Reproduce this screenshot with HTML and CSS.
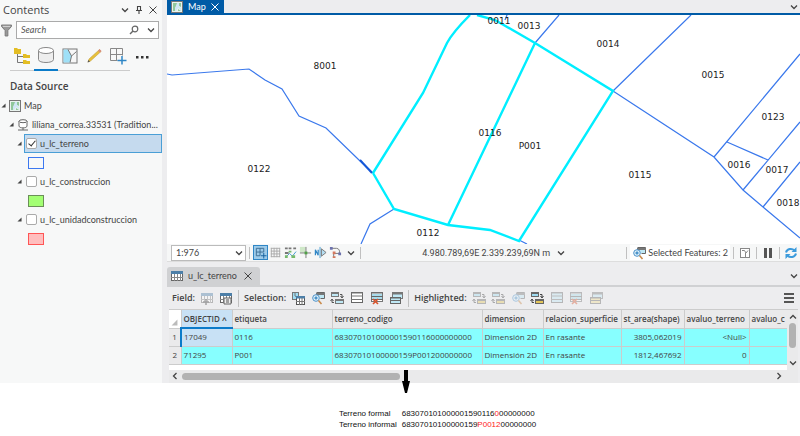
FILE: index.html
```html
<!DOCTYPE html>
<html lang="en">
<head>
  <meta charset="UTF-8" />
  <meta name="viewport" content="width=device-width, initial-scale=1.0"/>
  <title>Map - u_lc_terreno</title>
  <link rel="stylesheet" href="styles.css">
</head>
<body>
  <svg class="defs" width="0" height="0" aria-hidden="true">
    <symbol id="chevron" viewBox="0 0 8 8"><path d="M1 2.5 4 5.5 7 2.5" fill="none" stroke="currentColor" stroke-width="1.3"/></symbol>
    <symbol id="close" viewBox="0 0 8 8"><path d="M.5 .5 7.500 7.500M7.500 .5 .5 7.500" fill="none" stroke="currentColor" stroke-width="1"/></symbol>
    <symbol id="arrow" viewBox="0 0 6 6"><path d="M5.500 .5v5H.5z" fill="currentColor"/></symbol>
    <symbol id="map" viewBox="0 0 12 12"><rect x=".5" y=".5" width="11" height="11" fill="#e9f3ee" stroke="#777"/><path d="M2 2h4v3L4 7v3H2zM8 2h2v4L8 5zM7 8l3 2H7z" fill="#8fc79b"/><path d="M6 2h2v3l2 2v2L7 7 5 10H4V7z" fill="#cfe6f5"/></symbol>
    <symbol id="grid-table" viewBox="0 0 14 14"><rect x="1.500" y="2.500" width="11" height="9" fill="#fff" stroke="#666"/><path d="M1 2h12v3H1z" fill="#4d7fa8"/><path d="M1 8.500h12M4.500 5v7M7.500 5v7M10.500 5v7" stroke="#888" fill="none"/></symbol>
    <symbol id="rows" viewBox="0 0 14 14"><rect x="1.500" y="1.500" width="11" height="10" fill="#fff" stroke="#666"/><path d="M1 2h12M1 5h12M1 8.500h12" stroke="#777" fill="none"/></symbol>
    <symbol id="rows-blue" viewBox="0 0 14 14"><rect x="1.500" y="1.500" width="11" height="10" fill="#bfe8f5" stroke="#666"/><path d="M1 2h12M1 5h12M1 8.500h12" stroke="#777" fill="none"/></symbol>
    <symbol id="select-attr" viewBox="0 0 14 14"><rect x="1.500" y="1.500" width="6" height="7" fill="#9fdcf2" stroke="#777"/><path d="M4 2v3l4 2" fill="none" stroke="#777"/><rect x="5.500" y="5.500" width="8" height="8" fill="#fff" stroke="#555"/><path d="M5 5h9v2.500H5z" fill="#4d7fa8"/><path d="M5 10.500h9M8.500 7v7M11 7v7" stroke="#777" fill="none"/></symbol>
    <symbol id="zoom-sel" viewBox="0 0 14 14"><path d="M5.500 1.500h8v6h-4" fill="#bfe8f5" stroke="#666"/><path d="M5 2h9v2H5z" fill="#777"/><circle cx="5" cy="7" r="3.300" fill="#e5f4fb" stroke="#4b90c8"/><path d="M5 5.300v3.400M3.300 7h3.400" stroke="#1b75bb" fill="none"/><path d="m7.500 9.500 3 3.500" stroke="#c98a4b" stroke-width="1.600"/></symbol>
    <symbol id="switch" viewBox="0 0 14 14"><path d="M1 1h8v5H1z" fill="#777"/><path d="M2 3h6v2H2z" fill="#bfe8f5"/><path d="M5 8h9v5H5z" fill="#777"/><path d="M6 10h7v2H6z" fill="#bfe8f5"/><path d="M10 3.500h2v3M4 11.500H2V8.500M10.500 5l1.500 2 1.500-2M.5 10 2 8l1.500 2" stroke="#555" fill="none"/></symbol>
    <symbol id="switch-gold" viewBox="0 0 14 14"><path d="M1 1h8v5H1z" fill="#666"/><path d="M2 3h6v2H2z" fill="#9fdcf2"/><path d="M5 8h9v5H5z" fill="#666"/><path d="M6 10h7v2H6z" fill="#e3c65b"/><path d="M10 3.500h2v3M4 11.500H2V8.500M10.500 5l1.500 2 1.500-2M.5 10 2 8l1.500 2" stroke="#444" fill="none"/></symbol>
    <symbol id="clear" viewBox="0 0 14 14"><rect x="1.500" y="1.500" width="11" height="9" fill="#fff" stroke="#777"/><path d="M2 3h10v2H2zM2 6h10v2H2z" fill="#a9dcec"/><path d="M1 2h12M1 5.500h12M1 8.500h12" stroke="#666" fill="none"/><path d="m3 8 5 5M8 8l-5 5" stroke="#d9532c" stroke-width="1.600"/></symbol>
    <symbol id="stack" viewBox="0 0 14 14"><rect x="3.500" y="1.500" width="10" height="6" fill="#bfe8f5" stroke="#777"/><path d="M3 2.500h11" stroke="#777" stroke-width="2"/><rect x="1.500" y="6.500" width="10" height="6" fill="#bfe8f5" stroke="#666"/><path d="M1 7h11M1 9.500h11" stroke="#666" fill="none"/></symbol>
    <symbol id="stack-gold" viewBox="0 0 14 14"><rect x="3.500" y="1.500" width="10" height="6" fill="#bfe8f5" stroke="#777"/><path d="M3 2.500h11" stroke="#777" stroke-width="2"/><rect x="1.500" y="6.500" width="10" height="6" fill="#f0dc92" stroke="#666"/><path d="M1 7h11M1 9.500h11" stroke="#666" fill="none"/></symbol>
  </svg>

  <div class="app">
    <aside class="contents">
      <header class="pane-title">
        <h1>Contents</h1>
        <button aria-label="Options"><svg class="i8"><use href="#chevron"/></svg></button>
        <button aria-label="Pin"><svg class="i8" viewBox="0 0 8 8"><path d="M2.500 0v4.500M5.500 0v4.500M2 .5h4M1 4.500h6M4 4.500V8" fill="none" stroke="currentColor" stroke-width="1.100"/></svg></button>
        <button aria-label="Close"><svg class="i8"><use href="#close"/></svg></button>
      </header>

      <div class="search-row">
        <svg class="funnel" viewBox="0 0 12 14"><path d="M.5 1h11v1.500L7.500 7v6h-3V7L.5 2.500z" fill="#999" stroke="#777"/><path d="M2 2.500h8" stroke="#ddd"/></svg>
        <div class="search">
          <input type="text" placeholder="Search" aria-label="Search">
          <svg class="lens" viewBox="0 0 10 10"><circle cx="6" cy="4" r="2.800" fill="none" stroke="#666" stroke-width="1.200"/><path d="M4 6 1 9" stroke="#666" stroke-width="1.500"/></svg>
          <svg class="i8"><use href="#chevron"/></svg>
        </div>
      </div>

      <nav class="views">
        <button aria-label="List by drawing order"><svg viewBox="0 0 18 18"><path d="M4.500 7v8.500H11M4.500 9.500H11" fill="none" stroke="#777"/><path d="M1 1h3l1 1h3v5H1zM10 7h3l1 1h3v3h-7zM10 13h3l1 1h3v3h-7z" fill="#e3bd24"/></svg></button>
        <button class="active" aria-label="List by data source"><svg viewBox="0 0 18 18"><path d="M1.500 4.500v9c0 4 15 4 15 0v-9" fill="#eee" stroke="#888"/><ellipse cx="9" cy="4.500" rx="7.500" ry="3" fill="#fff" stroke="#888"/></svg></button>
        <button aria-label="List by selection"><svg viewBox="0 0 18 18"><rect x="2" y="2" width="14" height="14" fill="#f7f7f7" stroke="#777"/><path d="M2.500 2.500H7l3.500 6.500L9 15.500H2.500z" fill="#9fe0f7"/><path d="m7 2.500 3.500 6.500L9 15.500M10.500 9l5-4.500" fill="none" stroke="#777"/></svg></button>
        <button aria-label="List by editing"><svg viewBox="0 0 18 18"><path d="m3 15 1-3L14.500 2.500l1.500 2L5.500 14z" fill="#e8c13a" stroke="#c3a044" stroke-width=".6"/><path d="m2.500 15.500 1-2.500 1.500 1.500z" fill="#555"/><path d="m13 4 1.500-2 2 2L15 5.500z" fill="#d98d7f"/></svg></button>
        <button aria-label="List by snapping"><svg viewBox="0 0 18 18"><path d="M1.500 1.500h12v7M1.500 1.500v12h7M7.500 1.500v12M1.500 7.500h12" fill="none" stroke="#888"/><path d="M13 9v8.500M8.500 13.500h9" stroke="#2f86c6" stroke-width="1.500"/></svg></button>
        <button aria-label="More"><svg viewBox="0 0 18 18"><path d="M3 9h2.500v2.500H3zM8 9h2.500v2.500H8zM13 9h2.500v2.500H13z" fill="#333"/></svg></button>
      </nav>

      <h2>Data Source</h2>
      <ul class="tree">
        <li class="node"><svg class="tri"><use href="#arrow"/></svg><svg class="i12"><use href="#map"/></svg><span>Map</span></li>
        <li class="node source"><svg class="tri"><use href="#arrow"/></svg><svg class="i12" viewBox="0 0 12 12"><path d="M2 2v5c0 2.500 8 2.500 8 0V2" fill="#fff" stroke="#666"/><ellipse cx="6" cy="2.200" rx="4" ry="1.500" fill="#fff" stroke="#666"/><path d="M6 9v2M1 11h10" stroke="#666"/></svg><span>liliana_correa.33531 (Tradition...</span></li>
        <li class="node layer selected"><svg class="tri"><use href="#arrow"/></svg><label><input type="checkbox" checked> u_lc_terreno</label></li>
        <li class="swatch-row"><i class="swatch blue"></i></li>
        <li class="node layer"><svg class="tri"><use href="#arrow"/></svg><label><input type="checkbox"> u_lc_construccion</label></li>
        <li class="swatch-row"><i class="swatch green"></i></li>
        <li class="node layer"><svg class="tri"><use href="#arrow"/></svg><label><input type="checkbox"> u_lc_unidadconstruccion</label></li>
        <li class="swatch-row"><i class="swatch red"></i></li>
      </ul>
    </aside>

    <main class="work">
      <div class="map-tabs">
        <button class="map-tab"><svg class="i12"><use href="#map"/></svg>Map<svg class="i8"><use href="#close"/></svg></button>
        <svg class="i8"><use href="#chevron"/></svg>
      </div>

      <svg class="map" viewBox="0 0 633 229">
        <g class="parcel">
          <path d="M0 59 5 60 82 54 98 65 115 74 132 101 159 113 192 145 206 158"/>
          <path d="M227 194 203 209 194 229"/>
          <path d="M368 28 392 0M338 5 340 0M446 76 524 0M446 76 547 142 576 175 596 192 633 223M547 142 633 39M560 127 601 145M576 175 633 107M596 192 633 147M352 225 360 229"/>
        </g>
        <path class="parcel-dark" d="m193 145 12 13"/>
        <path class="picked" d="M206 158 256 78 280 28Q286 17 303 0M310 0 328 5 368 28 446 76 352 226 323 215 281 210 227 194 206 158M368 28 281 210"/>
        <g class="labels">
          <text x="158" y="54">8001</text>
          <text x="92" y="157">0122</text>
          <text x="332" y="9">0011</text>
          <text x="362" y="14">0013</text>
          <text x="441" y="32">0014</text>
          <text x="546" y="63">0015</text>
          <text x="606" y="105">0123</text>
          <text x="323" y="121">0116</text>
          <text x="363" y="134">P001</text>
          <text x="473" y="163">0115</text>
          <text x="572" y="153">0016</text>
          <text x="610" y="158">0017</text>
          <text x="621" y="191">0018</text>
          <text x="261" y="221">0112</text>
        </g>
      </svg>

      <div class="status">
        <div class="scale">
          <select aria-label="Scale"><option>1:976</option></select>
          <svg class="i8"><use href="#chevron"/></svg>
        </div>
        <i class="sep"></i>
        <div class="tools">
          <button class="on" aria-label="Snapping"><svg viewBox="0 0 14 14"><path d="M2.500 2.500h8v4M2.500 2.500v8h4M6.500 2.500v8M2.500 6.500h8" fill="none" stroke="#3b6c92"/><path d="M10.500 7.500v6M7.500 10.500h6" stroke="#125e9c"/></svg></button>
          <button aria-label="Grid"><svg viewBox="0 0 14 14"><path d="M2.500 2v10M5.500 2v10M8.500 2v10M11.500 2v10M2 2.500h10M2 5.500h10M2 8.500h10M2 11.500h10" fill="none" stroke="#aaa"/></svg></button>
          <button aria-label="Inference"><svg viewBox="0 0 14 14"><path d="M1 2.500h3M5 2.500h3M10 2.500h3M1 7.500h4" stroke="#777" stroke-width="2"/><path d="m2 12 4-4 3 3 4-5" fill="none" stroke="#3f98cf"/><path d="M1 10h3v3H1zM8 10h4v3H8zM5 5h3v2H5z" fill="#76b96a"/></svg></button>
          <button aria-label="Dynamic constraints"><svg viewBox="0 0 14 14"><path d="M1 1h6v6H1z" fill="#cfe8c8"/><path d="M7.500 1v12M1 7.500h12" stroke="#777"/><path d="M6 6h3v3H6z" fill="#4fa046"/></svg></button>
          <button aria-label="Ground to grid"><svg viewBox="0 0 14 14"><path d="M1.500 10V4l3 6V4" fill="none" stroke="#2f86c6" stroke-width="1.300"/><path d="M6.500 1v12" stroke="#3f98cf"/><path d="m8 3 5 4-5 4z" fill="#b5def2" stroke="#777"/></svg></button>
          <button aria-label="Topology"><svg viewBox="0 0 14 14"><path d="M2 2.500h6c3 0 4 3 3 6M11 8H5v4" fill="none" stroke="#777"/><path d="M1 1h3v3H1zM10 7h3v3h-3z" fill="#6d72ad"/><path d="M4 6h3v3H4zM4 11h3v2H4z" fill="#d6785e"/></svg></button>
          <button aria-label="More tools"><svg class="i8"><use href="#chevron"/></svg></button>
        </div>
        <i class="sep"></i>
        <div class="coords"><span>4.980.789,69E 2.339.239,69N m</span><svg class="i8"><use href="#chevron"/></svg></div>
        <i class="sep"></i>
        <button class="features"><svg class="i14"><use href="#zoom-sel"/></svg>Selected Features: 2</button>
        <i class="sep"></i>
        <button class="end-tool" aria-label="Show selection"><svg class="i12" viewBox="0 0 12 12"><rect x="1.500" y="1.500" width="9" height="9" fill="#fff" stroke="#888"/><path d="M3 3.500h2.500L7 6l2-2.500M6.500 6v4" fill="none" stroke="#888"/></svg></button>
        <i class="sep"></i>
        <button class="end-tool" aria-label="Pause drawing"><svg class="i12" viewBox="0 0 12 12"><path d="M2 1h3v10H2zM7 1h3v10H7z" fill="#555"/></svg></button>
        <i class="sep"></i>
        <button class="end-tool" aria-label="Refresh"><svg class="i12" viewBox="0 0 12 12"><path d="M1 5.500C2 1.500 7 1 9.500 3.500M11 6.500C10 10.500 5 11 2.500 8.500" fill="none" stroke="#3c9bdc" stroke-width="2"/><path d="M11.500 0v5h-5zM.5 12V7h5z" fill="#3c9bdc"/></svg></button>
      </div>

      <div class="table-tabs">
        <button class="table-tab"><svg class="i14"><use href="#grid-table"/></svg>u_lc_terreno<svg class="i8"><use href="#close"/></svg></button>
        <svg class="i8"><use href="#chevron"/></svg>
      </div>

      <div class="toolbar">
        <b>Field:</b>
        <div class="icons two">
          <button class="faded" aria-label="Add field"><svg class="i14" viewBox="0 0 14 14"><use href="#grid-table"/><path d="M6 8v6M3 11h6" stroke="#333" stroke-width="1.500"/></svg></button>
          <button aria-label="Calculate field"><svg class="i14" viewBox="0 0 14 14"><use href="#grid-table"/><path d="M5 7h7v6H5z" fill="#eee" stroke="#666"/><path d="M7 9h3M7 11h3" stroke="#555"/></svg></button>
        </div>
        <i class="sep"></i>
        <b>Selection:</b>
        <div class="icons six">
          <button aria-label="Select by attributes"><svg class="i14"><use href="#select-attr"/></svg></button>
          <button aria-label="Zoom to selection"><svg class="i14"><use href="#zoom-sel"/></svg></button>
          <button aria-label="Switch selection"><svg class="i14"><use href="#switch"/></svg></button>
          <button aria-label="Select all"><svg class="i14"><use href="#rows"/></svg></button>
          <button aria-label="Clear selection"><svg class="i14"><use href="#clear"/></svg></button>
          <button aria-label="Copy selection"><svg class="i14"><use href="#stack"/></svg></button>
        </div>
        <i class="sep"></i>
        <b>Highlighted:</b>
        <div class="icons seven">
          <button class="faded" aria-label="Unselect"><svg class="i14"><use href="#switch-gold"/></svg></button>
          <button class="faded" aria-label="Reselect"><svg class="i14"><use href="#switch-gold"/></svg></button>
          <button class="faded" aria-label="Zoom to highlighted"><svg class="i14"><use href="#zoom-sel"/></svg></button>
          <button aria-label="Switch highlighted"><svg class="i14"><use href="#switch-gold"/></svg></button>
          <button class="faded" aria-label="Highlight all"><svg class="i14"><use href="#rows-blue"/></svg></button>
          <button class="faded" aria-label="Delete highlighted"><svg class="i14"><use href="#clear"/></svg></button>
          <button class="faded" aria-label="Copy highlighted"><svg class="i14"><use href="#stack-gold"/></svg></button>
        </div>
        <button class="menu" aria-label="Menu"><svg class="i12" viewBox="0 0 12 12"><path d="M1 2h10M1 6h10M1 10h10" stroke="#555" stroke-width="2"/></svg></button>
      </div>

      <div class="grid">
        <div class="grid-view">
          <table>
            <colgroup><col class="w-num"><col class="w-id"><col class="w-tag"><col class="w-code"><col class="w-dim"><col class="w-rel"><col class="w-area"><col class="w-val"><col></colgroup>
            <thead>
              <tr><th class="corner"><svg><use href="#arrow"/></svg></th><th class="sorted">OBJECTID ˄</th><th>etiqueta</th><th>terreno_codigo</th><th>dimension</th><th>relacion_superficie</th><th>st_area(shape)</th><th>avaluo_terreno</th><th>avaluo_c</th></tr>
            </thead>
            <tbody>
              <tr class="current"><th>1</th><td>17049</td><td>0116</td><td>683070101000001590116000000000</td><td>Dimensión 2D</td><td>En rasante</td><td class="num">3805,062019</td><td class="num">&lt;Null&gt;</td><td></td></tr>
              <tr><th>2</th><td>71295</td><td>P001</td><td>68307010100000159P001200000000</td><td>Dimensión 2D</td><td>En rasante</td><td class="num">1812,467692</td><td class="num">0</td><td></td></tr>
            </tbody>
          </table>
        </div>
        <div class="vscroll"><svg class="i8 up"><use href="#chevron"/></svg><i></i><svg class="i8"><use href="#chevron"/></svg></div>
        <div class="hscroll">
          <svg class="i8 left"><use href="#chevron"/></svg><div class="track"><i></i></div><svg class="i8 right"><use href="#chevron"/></svg>
          <svg class="pointer" viewBox="0 0 8 24"><path d="M2 0h4v11h2L5 23H3L0 11h2z" fill="#000"/></svg>
        </div>
      </div>
    </main>
  </div>

  <dl class="caption">
    <dt>Terreno formal</dt><dd>683070101000001590116<em>0</em>00000000</dd>
    <dt>Terreno informal</dt><dd>68307010100000159<em>P0012</em>00000000</dd>
  </dl>
</body>
</html>
```

FILE: styles.css
```css
* {
  box-sizing: border-box;
  margin: 0;
  padding: 0;
}

body {
  background: #fff;
  color: #444;
  font-family: Lato, "Open Sans", sans-serif;
  font-size: 9px;
  line-height: 12px;
}

button,
input,
select {
  font: inherit;
  color: inherit;
  border: none;
  background: none;
}

button {
  display: flex;
  align-items: center;
}

svg {
  display: block;
  flex: none;
}

.defs {
  position: absolute;
}

.i8 { width: 8px; height: 8px; }
.i12 { width: 12px; height: 12px; }
.i14 { width: 14px; height: 14px; }
.tri { width: 5px; height: 5px; }

.app {
  display: grid;
  grid-template-columns: 162px 1fr;
  column-gap: 5px;
  background: #ededef;
}

/* contents pane */
.contents {
  min-width: 0;
  background: #f7f8f8;
}

.pane-title {
  display: flex;
  align-items: center;
  gap: 6px;
  height: 19px;
  padding: 0 5px 0 3px;
}

.pane-title h1 {
  flex: 1;
  font-family: "Open Sans", sans-serif;
  font-size: 11px;
  font-weight: 400;
}

.search-row {
  display: flex;
  align-items: center;
  gap: 4px;
  padding: 2px 3px 0 1px;
}

.funnel {
  width: 11px;
  height: 13px;
}

.search {
  flex: 1;
  display: flex;
  align-items: center;
  gap: 8px;
  min-width: 0;
  height: 18px;
  padding: 0 3px 0 4px;
  border: 1px solid #aaa;
  background: #fff;
}

.search input {
  flex: 1;
  min-width: 0;
  outline: none;
}

.search input::placeholder {
  color: #555;
  font-style: italic;
}

.lens {
  width: 10px;
  height: 10px;
}

.views {
  display: flex;
  width: 144px;
  margin: 6px 0 0 10px;
}

.views button {
  flex: 1;
  justify-content: center;
  height: 26px;
  padding-bottom: 4px;
  border-bottom: 1px solid #ccc;
}

.views button:last-child {
  border-color: transparent;
}

.views .active {
  border-bottom: 2px solid #0b7bc9;
}

.views svg {
  width: 18px;
  height: 18px;
}

.contents h2 {
  padding: 9px 0 4px 10px;
  font-family: "Open Sans", sans-serif;
  font-size: 10px;
  font-weight: 600;
  line-height: 12px;
}

.tree {
  list-style: none;
}

.node {
  display: flex;
  align-items: center;
  gap: 3px;
  height: 19px;
  padding-left: 1px;
  white-space: nowrap;
}

.node.source {
  padding-left: 9px;
}

.node.layer {
  gap: 2px;
  padding-left: 17px;
}

.node label {
  flex: 1;
  display: flex;
  align-items: center;
  gap: 3px;
  height: 19px;
  padding-left: 1px;
  border: 1px solid transparent;
}

.selected label {
  border-color: #4a9fd6;
  background: #c5daee;
}

input[type="checkbox"] {
  appearance: none;
  width: 11px;
  height: 11px;
  border: 1px solid #aaa;
  border-radius: 2px;
  background: #fff;
}

input[type="checkbox"]:checked::after {
  content: "";
  display: block;
  width: 3px;
  height: 6px;
  margin-left: 3px;
  border: solid #333;
  border-width: 0 1px 1px 0;
  transform: rotate(40deg);
}

.swatch-row {
  display: flex;
  align-items: center;
  height: 19px;
  padding-left: 28px;
}

.swatch {
  width: 16px;
  height: 12px;
  border: 1px solid;
}

.blue { border-color: #3c78f0; }
.green { border-color: #6b8f58; background: #a3ff73; }
.red { border-color: #f55; background: #ffbebe; }

/* map view */
.work {
  min-width: 0;
}

.map-tabs {
  display: flex;
  align-items: center;
  justify-content: space-between;
  height: 15px;
  padding-right: 2px;
  border-bottom: 2px solid #005ba6;
}

.map-tab {
  gap: 5px;
  height: 14px;
  padding: 0 5px 0 4px;
  background: #005ba6;
  color: #fff;
}

.map {
  width: 100%;
  background: #fff;
  fill: none;
}

.parcel {
  stroke: #3a78ec;
  stroke-width: 1.2;
}

.parcel-dark {
  stroke: #1557d8;
  stroke-width: 2;
}

.picked {
  stroke: #00eeff;
  stroke-width: 2.4;
}

.labels {
  fill: #222;
  font-family: "DejaVu Sans", sans-serif;
  font-size: 9px;
  text-anchor: middle;
}

.status {
  display: flex;
  align-items: center;
  height: 18px;
  padding: 0 3px 0 4px;
  background: #f6f7f7;
  border-bottom: 1px solid #ddd;
}

.sep {
  width: 1px;
  height: 12px;
  background: #c0c0c0;
}

.scale {
  display: flex;
  align-items: center;
  width: 75px;
  height: 16px;
  margin-right: 3px;
  padding-right: 2px;
  border: 1px solid #bbb;
  background: #fff;
}

.scale select {
  flex: 1;
  appearance: none;
  padding-left: 4px;
}

.tools {
  display: flex;
  margin: 0 2px 0 3px;
}

.tools button {
  justify-content: center;
  width: 15px;
  height: 15px;
}

.tools .on {
  border: 1px solid #2f86c6;
  background: #9dcbea;
}

.tools svg {
  width: 13px;
  height: 13px;
}

.tools .i8 {
  width: 8px;
  height: 8px;
}

.coords {
  flex: 1;
  display: flex;
  align-items: center;
  justify-content: center;
  gap: 7px;
  font-family: Roboto, sans-serif;
}

.features {
  gap: 2px;
  height: 15px;
  margin: 0 3px;
  padding: 0 2px;
  background: #fff;
}

.end-tool {
  margin: 0 5px;
}

.end-tool:last-child {
  margin-right: 0;
}

/* attribute table */
.table-tabs {
  display: flex;
  align-items: center;
  justify-content: space-between;
  height: 25px;
  padding: 5px 2px 0 0;
  border-bottom: 2px solid #d0d1d3;
}

.table-tab {
  gap: 4px;
  height: 18px;
  padding: 0 8px 0 3px;
  border-radius: 3px 3px 0 0;
  background: #d0d1d3;
}

.table-tab .i8 {
  margin-left: 3px;
}

.toolbar {
  display: flex;
  align-items: center;
  height: 22px;
  padding: 0 5px;
  font-family: "Open Sans", sans-serif;
}

.toolbar .sep {
  height: 17px;
  margin-right: 5px;
}

.toolbar b {
  font-weight: 600;
}

.icons {
  display: flex;
  justify-content: space-between;
  margin: 0 5px;
}

.two { width: 33px; }
.six { width: 112px; }
.seven { width: 131px; }

.faded {
  opacity: 0.4;
}

.menu {
  margin-left: auto;
}

.grid {
  display: grid;
  grid-template-columns: 1fr 11px;
  margin: 0 2px;
  border-top: 1px solid #ccc;
  background: #eaeaeb;
}

.grid-view {
  min-width: 0;
  padding-bottom: 5px;
  background: #fff;
}

table {
  width: 100%;
  table-layout: fixed;
  border-collapse: collapse;
  font-family: "Open Sans", sans-serif;
  font-size: 8px;
}

.w-num { width: 12px; }
.w-id { width: 51px; }
.w-tag { width: 100px; }
.w-code { width: 150px; }
.w-dim { width: 61px; }
.w-rel { width: 78px; }
.w-area { width: 63px; }
.w-val { width: 65px; }

th,
td {
  height: 18px;
  padding: 0 2px;
  border-right: 1px solid #ccc;
  border-bottom: 1px solid #ccc;
  overflow: hidden;
  text-align: left;
  white-space: nowrap;
}

th {
  background: #eaeaeb;
  font-weight: 600;
}

th:last-child,
td:last-child {
  border-right: none;
}

td {
  background: #87ffff;
}

td.num {
  text-align: right;
}

tbody th {
  font-weight: 400;
  text-align: center;
}

.corner {
  background: #fff;
  color: #bbb;
  vertical-align: bottom;
}

.corner svg {
  width: 7px;
  height: 7px;
  margin-bottom: 2px;
}

.sorted {
  background: #c8e1f5;
  border-bottom: 2px solid #0b7bc9;
}

.current th {
  border-right: 2px solid #0b7bc9;
}

.current td:nth-child(2) {
  background: #c8e1f5;
}

.vscroll {
  display: flex;
  flex-direction: column;
  align-items: center;
  justify-content: space-between;
  padding: 3px 0;
}

.vscroll i {
  width: 7px;
  height: 25px;
  margin-bottom: 8px;
  border-radius: 4px;
  background: #b2b2b2;
}

.up { transform: rotate(180deg); }
.left { transform: rotate(90deg); }
.right { transform: rotate(-90deg); }

.hscroll {
  grid-column: 1 / -1;
  position: relative;
  display: flex;
  align-items: center;
  gap: 3px;
  height: 13px;
  padding: 0 15px 0 2px;
}

.track {
  flex: 1;
}

.track i {
  display: block;
  width: 37%;
  height: 7px;
  border-radius: 4px;
  background: #b2b2b2;
}

.pointer {
  position: absolute;
  top: 0;
  left: 37%;
  width: 8px;
  height: 24px;
}

/* parcel code caption */
.caption {
  display: grid;
  grid-template-columns: max-content max-content;
  justify-content: center;
  column-gap: 5px;
  margin-top: 25px;
  padding-left: 75px;
  color: #111;
  font-family: "Liberation Sans", sans-serif;
  font-size: 8px;
  line-height: 11px;
}

.caption em {
  color: #f22;
  font-style: normal;
}
```
